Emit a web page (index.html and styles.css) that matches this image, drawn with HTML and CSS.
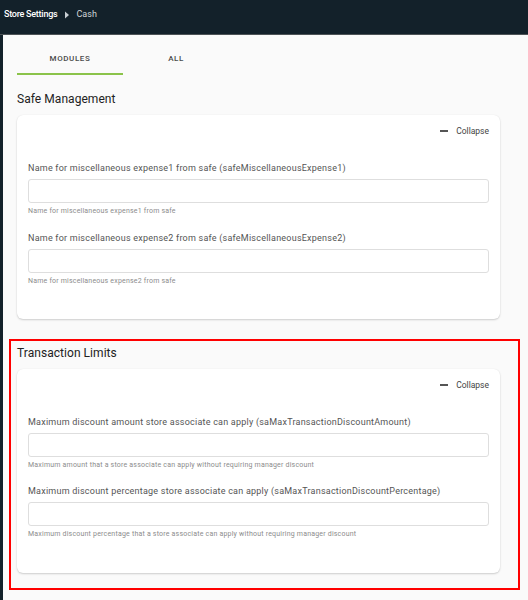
FILE: index.html
```html
<!DOCTYPE html>
<html>
<head>
<meta charset="utf-8">
<link rel="stylesheet" href="styles.css">
</head>
<body>
<header class="topbar">
  <span class="crumb-main">Store Settings</span>
  <svg class="crumb-arrow" width="6" height="8" viewBox="0 0 6 8"><path d="M1 0.5 L5 4 L1 7.5 Z" fill="#c9cfd3"/></svg>
  <span class="crumb-sub">Cash</span>
</header>
<main class="content">
  <nav class="tabs">
    <div class="tab active">MODULES</div>
    <div class="tab">ALL</div>
  </nav>

  <section class="section">
    <h2 class="section-title">Safe Management</h2>
    <div class="card">
      <div class="collapse-row"><span class="dash"></span><span class="collapse-text">Collapse</span></div>
      <div class="field first">
        <label class="field-label">Name for miscellaneous expense1 from safe (safeMiscellaneousExpense1)</label>
        <div class="input"></div>
        <div class="helper">Name for miscellaneous expense1 from safe</div>
      </div>
      <div class="field">
        <label class="field-label">Name for miscellaneous expense2 from safe (safeMiscellaneousExpense2)</label>
        <div class="input"></div>
        <div class="helper">Name for miscellaneous expense2 from safe</div>
      </div>
    </div>
  </section>

  <section class="section highlight">
    <h2 class="section-title">Transaction Limits</h2>
    <div class="card">
      <div class="collapse-row"><span class="dash"></span><span class="collapse-text">Collapse</span></div>
      <div class="field first">
        <label class="field-label">Maximum discount amount store associate can apply (saMaxTransactionDiscountAmount)</label>
        <div class="input"></div>
        <div class="helper">Maximum amount that a store associate can apply without requiring manager discount</div>
      </div>
      <div class="field">
        <label class="field-label">Maximum discount percentage store associate can apply (saMaxTransactionDiscountPercentage)</label>
        <div class="input"></div>
        <div class="helper">Maximum discount percentage that a store associate can apply without requiring manager discount</div>
      </div>
    </div>
  </section>
</main>
</body>
</html>
```

FILE: styles.css
```css
* { box-sizing: border-box; }
html, body { margin: 0; padding: 0; }
body {
  background: #13212a;
  font-family: Roboto, "Liberation Sans", sans-serif;
  width: 528px;
  height: 600px;
  overflow: hidden;
}
.topbar {
  height: 35px;
  display: flex;
  align-items: flex-start;
  padding: 9px 0 0 4px;
  border-bottom: 1px solid #4d5356;
  color: #fff;
  font-size: 9px;
  line-height: 11px;
}
.crumb-main { font-weight: 500; color: #fff; letter-spacing: -0.25px; }
.crumb-arrow { margin: 1.5px 6px 0 7px; }
.crumb-sub { color: #d0d5d8; letter-spacing: 0.1px; }
.content {
  margin-left: 3px;
  background: #fafafa;
  height: 565px;
  padding-top: 8px;
}
.tabs {
  display: flex;
  padding-left: 14px;
}
.tab {
  width: 106px;
  height: 32px;
  display: flex;
  align-items: center;
  justify-content: center;
  font-size: 8px;
  font-weight: 500;
  letter-spacing: 0.6px;
  color: #4a4a4a;
  border-bottom: 2px solid transparent;
}
.tab.active { border-bottom-color: #8bc34a; }
.section { padding-left: 14px; width: 497px; }
.section-title {
  margin: 16px 0 8px 0;
  font-size: 12px;
  line-height: 16px;
  font-weight: 400;
  color: #222;
  letter-spacing: 0.05px;
}
.card {
  width: 483px;
  background: #fff;
  border-radius: 6px;
  box-shadow: 0 1px 2px rgba(0,0,0,0.18), 0 0 1px rgba(0,0,0,0.08);
  padding: 10px 11px 33px 11px;
}
.collapse-row {
  display: flex;
  justify-content: flex-end;
  align-items: center;
  height: 12px;
  font-size: 8.5px;
  color: #444;
}
.dash {
  width: 8px;
  height: 1.5px;
  background: #555;
  margin-right: 8px;
}
.field { margin-top: 16px; }
.field.first { margin-top: 25px; }
.field-label {
  display: block;
  font-size: 9px;
  line-height: 12px;
  color: #555;
  letter-spacing: 0.23px;
}
.input {
  margin-top: 5px;
  height: 24px;
  border: 1px solid #dedede;
  border-radius: 3px;
  background: #fff;
}
.helper {
  margin-top: 3px;
  font-size: 7px;
  line-height: 10px;
  color: #8c8c8c;
  letter-spacing: 0.2px;
}
.highlight {
  margin-top: 20px;
  margin-left: 6px;
  width: 511px;
  border: 2px solid #ff0000;
  padding: 4px 18px 15px 6px;
}
.highlight .section-title { margin-top: 0; }
.highlight .card { padding-bottom: 34px; }
.highlight .field { margin-top: 15px; }
.highlight .field.first { margin-top: 25px; }
```
